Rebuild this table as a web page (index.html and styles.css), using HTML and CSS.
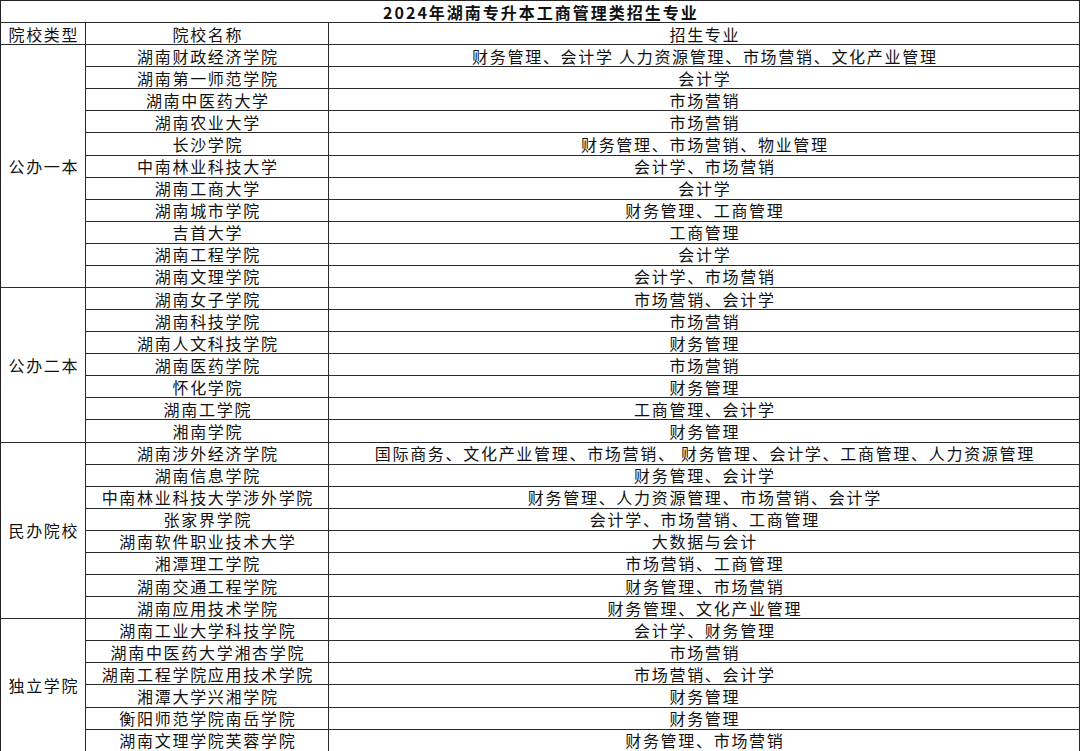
FILE: index.html
```html
<!DOCTYPE html>
<html lang="zh-CN">
<head>
<meta charset="utf-8">
<title>2024年湖南专升本工商管理类招生专业</title>
<link rel="stylesheet" href="styles.css">
</head>
<body>
<div class="sheet">
  <div class="cell title">2024年湖南专升本工商管理类招生专业</div>

  <div class="cell head">院校类型</div>
  <div class="cell head">院校名称</div>
  <div class="cell head">招生专业</div>

  <div class="cell group g11">公办一本</div>
  <div class="cell name">湖南财政经济学院</div><div class="cell major">财务管理、会计学 人力资源管理、市场营销、文化产业管理</div>
  <div class="cell name">湖南第一师范学院</div><div class="cell major">会计学</div>
  <div class="cell name">湖南中医药大学</div><div class="cell major">市场营销</div>
  <div class="cell name">湖南农业大学</div><div class="cell major">市场营销</div>
  <div class="cell name">长沙学院</div><div class="cell major">财务管理、市场营销、物业管理</div>
  <div class="cell name">中南林业科技大学</div><div class="cell major">会计学、市场营销</div>
  <div class="cell name">湖南工商大学</div><div class="cell major">会计学</div>
  <div class="cell name">湖南城市学院</div><div class="cell major">财务管理、工商管理</div>
  <div class="cell name">吉首大学</div><div class="cell major">工商管理</div>
  <div class="cell name">湖南工程学院</div><div class="cell major">会计学</div>
  <div class="cell name">湖南文理学院</div><div class="cell major">会计学、市场营销</div>

  <div class="cell group g7">公办二本</div>
  <div class="cell name">湖南女子学院</div><div class="cell major">市场营销、会计学</div>
  <div class="cell name">湖南科技学院</div><div class="cell major">市场营销</div>
  <div class="cell name">湖南人文科技学院</div><div class="cell major">财务管理</div>
  <div class="cell name">湖南医药学院</div><div class="cell major">市场营销</div>
  <div class="cell name">怀化学院</div><div class="cell major">财务管理</div>
  <div class="cell name">湖南工学院</div><div class="cell major">工商管理、会计学</div>
  <div class="cell name">湘南学院</div><div class="cell major">财务管理</div>

  <div class="cell group g8">民办院校</div>
  <div class="cell name">湖南涉外经济学院</div><div class="cell major">国际商务、文化产业管理、市场营销、 财务管理、会计学、工商管理、人力资源管理</div>
  <div class="cell name">湖南信息学院</div><div class="cell major">财务管理、会计学</div>
  <div class="cell name">中南林业科技大学涉外学院</div><div class="cell major">财务管理、人力资源管理、市场营销、会计学</div>
  <div class="cell name">张家界学院</div><div class="cell major">会计学、市场营销、工商管理</div>
  <div class="cell name">湖南软件职业技术大学</div><div class="cell major">大数据与会计</div>
  <div class="cell name">湘潭理工学院</div><div class="cell major">市场营销、工商管理</div>
  <div class="cell name">湖南交通工程学院</div><div class="cell major">财务管理、市场营销</div>
  <div class="cell name">湖南应用技术学院</div><div class="cell major">财务管理、文化产业管理</div>

  <div class="cell group g6">独立学院</div>
  <div class="cell name">湖南工业大学科技学院</div><div class="cell major">会计学、财务管理</div>
  <div class="cell name">湖南中医药大学湘杏学院</div><div class="cell major">市场营销</div>
  <div class="cell name">湖南工程学院应用技术学院</div><div class="cell major">市场营销、会计学</div>
  <div class="cell name">湘潭大学兴湘学院</div><div class="cell major">财务管理</div>
  <div class="cell name">衡阳师范学院南岳学院</div><div class="cell major">财务管理</div>
  <div class="cell name">湖南文理学院芙蓉学院</div><div class="cell major">财务管理、市场营销</div>
</div>
</body>
</html>
```

FILE: styles.css
```css
html, body {
  margin: 0;
  padding: 0;
  background: #ffffff;
  overflow: hidden;
}

.sheet {
  width: 1080px;
  box-sizing: border-box;
  display: grid;
  grid-template-columns: 85px 243px 751px;
  grid-auto-rows: 22.08px;
  border-left: 1px solid #222;
  border-top: 1px solid #222;
  font-family: "Noto Sans CJK SC", "Noto Sans", sans-serif;
  font-size: 16px;
  color: #111;
}

.cell {
  box-sizing: border-box;
  border-right: 1px solid #2a2a2a;
  border-bottom: 1px solid #2a2a2a;
  display: flex;
  align-items: center;
  justify-content: center;
  line-height: 1;
  letter-spacing: 1.7px;
  padding-left: 1.7px;
  white-space: nowrap;
}

.title {
  grid-column: 1 / 4;
  font-weight: bold;
  letter-spacing: 2px;
  padding-left: 2px;
}

.head {
  padding-top: 1px;
}

.group {
  grid-column: 1;
}

.g11 { grid-row: span 11; }
.g7 { grid-row: span 7; }
.g8 { grid-row: span 8; }
.g6 { grid-row: span 6; }

.name {
  grid-column: 2;
}

.major {
  grid-column: 3;
}
```
